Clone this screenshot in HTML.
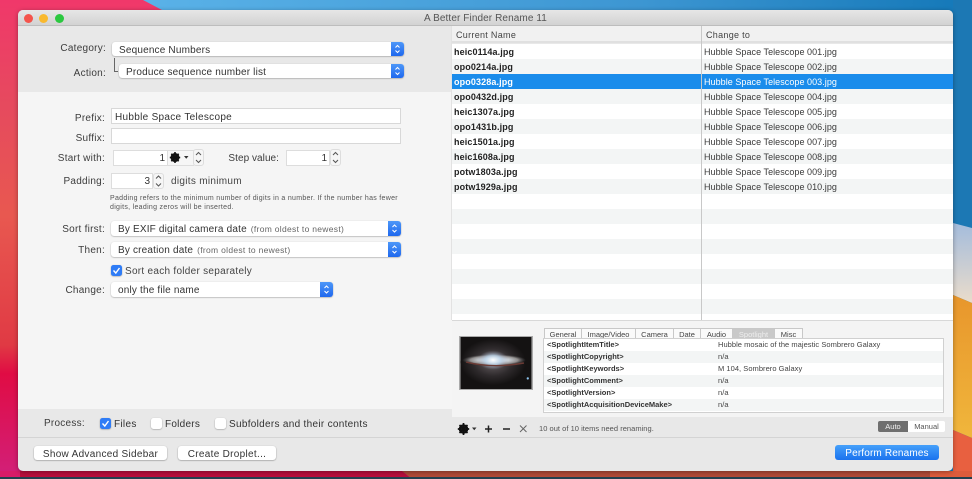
<!DOCTYPE html>
<html><head><meta charset="utf-8"><style>
*{box-sizing:border-box}
html,body{margin:0;padding:0;width:972px;height:479px;overflow:hidden;background:#1d7fbd}
body{position:relative;font-family:"Liberation Sans",sans-serif;font-size:10px;color:#333}
#win{position:absolute;left:18px;top:10px;width:935px;height:461px;border-radius:5px;overflow:hidden;background:#e8e8e8;box-shadow:0 1px 5px rgba(0,0,0,.35);filter:blur(.35px)}
#win div,#win svg.a{position:absolute}
.t{white-space:nowrap;line-height:12px}
.l{text-align:right;white-space:nowrap;line-height:12px;color:#3c3c3c;letter-spacing:.25px}
.sel{background:#fff;border-radius:3px;box-shadow:0 .5px 1.5px rgba(0,0,0,.35);height:15px;line-height:16px;padding-left:7px;color:#333;letter-spacing:.18px;white-space:nowrap}
.sel i{font-style:normal;color:#666;font-size:8.5px;letter-spacing:.3px;margin-left:1px}
.sb{position:absolute;right:0;top:0;width:13px;height:100%;background:linear-gradient(#4d97f8,#1f68ee);border-radius:0 3px 3px 0}
.sb svg,.st svg{position:absolute;left:0;top:0}
.inp{background:#fff;border:1px solid #d8d8d8;height:16px;line-height:17px;padding-left:3px;letter-spacing:.3px;white-space:nowrap}
.num{background:#fff;border:1px solid #ddd;height:16px;line-height:16px;text-align:right;padding-right:2px}
.st{width:11px;height:16px;background:#f6f6f6;border:1px solid #ddd;border-radius:3px}
.cb{width:11px;height:11px;border-radius:2.5px;background:#fff;box-shadow:0 .5px 1.5px rgba(0,0,0,.35)}
.cb.on{background:#2f7cf6}
.btn{background:#fff;border-radius:3px;box-shadow:0 .5px 1.5px rgba(0,0,0,.4);height:15px;line-height:17px;text-align:center;letter-spacing:.3px;white-space:nowrap}
.r{left:434px;width:501px;height:15px;line-height:17px;white-space:nowrap;font-size:9px;color:#222}
.r b{position:absolute;left:2px;top:0;color:#222;letter-spacing:.12px}
.r span{position:absolute;left:252px;top:0;letter-spacing:.05px;color:#3a3a3a}
.m{left:526px;width:399px;height:12px;line-height:12px;font-size:7.5px;white-space:nowrap}
.m b{position:absolute;left:3px;top:0;color:#333;letter-spacing:0}
.m span{position:absolute;left:174px;top:0;color:#444;letter-spacing:.04px}
.tab{top:318px;height:12px;line-height:11px;text-align:center;font-size:7.5px;color:#444;border:1px solid #c8c8c8;border-left:0;background:#fafafa}
</style></head><body>
<svg style="position:absolute;left:0;top:0" width="972" height="479" viewBox="0 0 972 479">
<defs>
<linearGradient id="p" x1="0" y1="0" x2="0" y2="1"><stop offset="0" stop-color="#f0386a"/><stop offset=".22" stop-color="#e64a5e"/><stop offset=".45" stop-color="#e85850"/><stop offset=".72" stop-color="#e03a44"/><stop offset=".78" stop-color="#e00c44"/><stop offset="1" stop-color="#d2207a"/></linearGradient>
<linearGradient id="b" x1="0" y1="0" x2="1" y2="0"><stop offset="0" stop-color="#5ab2e8"/><stop offset=".6" stop-color="#3d96d2"/><stop offset="1" stop-color="#1478b8"/></linearGradient>
<linearGradient id="w" x1="0" y1="0" x2="0" y2="1"><stop offset="0" stop-color="#a4bcdc"/><stop offset="1" stop-color="#eadccb"/></linearGradient>
<linearGradient id="o" x1="0" y1="0" x2="0" y2="1"><stop offset="0" stop-color="#e8962c"/><stop offset="1" stop-color="#f0b63c"/></linearGradient>
</defs>
<rect width="972" height="479" fill="url(#p)"/>
<polygon points="143,0 972,0 972,479 700,479 162,10" fill="url(#b)"/>
<polygon points="953,0 972,0 972,229 953,224" fill="#1c78b4"/>
<polygon points="953,223 972,228 972,303 953,295" fill="url(#w)"/>
<polygon points="953,295 972,303 972,438 953,430" fill="url(#o)"/>
<polygon points="953,430 972,438 972,479 953,479" fill="#e86040"/>
<polygon points="0,471 402,471 412,479 0,479" fill="#b80f3c"/>
<polygon points="0,471 20,471 20,479 0,479" fill="#d81c68"/>
<polygon points="402,471 972,471 972,479 412,479" fill="#b04a38"/>
<rect x="930" y="471" width="42" height="8" fill="#dd5c3c"/>
<rect x="0" y="477" width="972" height="2" fill="#23404f"/>
</svg>
<div id="win">
<!-- title -->
<div style="left:0;top:0;width:935px;height:16px;background:linear-gradient(#e6e6e6,#d2d2d2);border-bottom:1px solid #bdbdbd"></div>
<div style="left:6px;top:4px;width:9px;height:9px;border-radius:50%;background:#f4544c"></div>
<div style="left:21px;top:4px;width:9px;height:9px;border-radius:50%;background:#f9b92e"></div>
<div style="left:37px;top:4px;width:9px;height:9px;border-radius:50%;background:#2bc840"></div>
<div class="t" style="left:0;top:3px;width:935px;text-align:center;color:#555;letter-spacing:.1px;font-size:10px">A Better Finder Rename 11</div>

<!-- left bands -->
<div style="left:0;top:82px;width:434px;height:317px;background:#f5f5f5"></div>
<div style="left:0;top:427px;width:935px;height:1px;background:#d4d4d4"></div>

<!-- category -->
<div class="l" style="left:0;top:33px;width:88px">Category:</div>
<div class="l" style="left:0;top:58px;width:88px">Action:</div>
<div class="sel" style="left:94px;top:32px;width:292px;height:14px;line-height:17px">Sequence Numbers<span class="sb"><svg width="13" height="14"><path d="M4.500 5.500 6.500 3.500 8.500 5.500M4.500 8.500 6.500 10.500 8.500 8.500" fill="none" stroke="#fff"/></svg></span></div>
<div style="left:96px;top:48px;width:1px;height:14px;background:#666"></div>
<div style="left:96px;top:61px;width:4px;height:1px;background:#666"></div>
<div class="sel" style="left:101px;top:54px;width:285px;height:14px;line-height:17px">Produce sequence number list<span class="sb"><svg width="13" height="14"><path d="M4.500 5.500 6.500 3.500 8.500 5.500M4.500 8.500 6.500 10.500 8.500 8.500" fill="none" stroke="#fff"/></svg></span></div>

<!-- prefix etc -->
<div class="l" style="left:0;top:103px;width:87px">Prefix:</div>
<div class="inp" style="left:93px;top:98px;width:290px">Hubble Space Telescope</div>
<div class="l" style="left:0;top:123px;width:87px">Suffix:</div>
<div class="inp" style="left:93px;top:118px;width:290px"></div>
<div class="l" style="left:0;top:143px;width:87px">Start with:</div>
<div class="num" style="left:95px;top:140px;width:55px">1</div>
<div style="left:150px;top:140px;width:26px;height:16px;background:#f6f6f6;border-top:1px solid #ddd;border-bottom:1px solid #ddd"></div>
<svg class="a" style="left:151px;top:141px" width="22" height="13" viewBox="0 0 22 13"><circle cx="6" cy="6.500" r="3.400" fill="none" stroke="#111" stroke-width="2.300"/><path d="M6 1V12M.8 6.500H11.200M2.300 2.800 9.700 10.200M9.700 2.800 2.300 10.200" stroke="#111" stroke-width="1.600"/><path d="M15 5h4.500l-2.250 2.800z" fill="#333"/></svg>
<div class="st" style="left:175px;top:139px;height:17px"><svg width="9" height="15"><path d="M2 5 4.500 2.500 7 5M2 10 4.500 12.500 7 10" fill="none" stroke="#555"/></svg></div>
<div class="l" style="left:190px;top:143px;width:71px;letter-spacing:.05px">Step value:</div>
<div class="num" style="left:268px;top:140px;width:44px">1</div>
<div class="st" style="left:312px;top:139px;height:17px"><svg width="9" height="15"><path d="M2 5 4.500 2.500 7 5M2 10 4.500 12.500 7 10" fill="none" stroke="#555"/></svg></div>
<div class="l" style="left:0;top:166px;width:87px">Padding:</div>
<div class="num" style="left:93px;top:163px;width:42px">3</div>
<div class="st" style="left:135px;top:163px"><svg width="9" height="14"><path d="M2 4.500 4.500 2 7 4.500M2 9.500 4.500 12 7 9.500" fill="none" stroke="#555"/></svg></div>
<div class="t" style="left:153px;top:166px;letter-spacing:.3px;color:#444">digits minimum</div>
<div class="t" style="left:92px;top:184px;width:310px;font-size:7px;line-height:9px;color:#555;letter-spacing:.3px">Padding refers to the minimum number of digits in a number. If the number has fewer<br>digits, leading zeros will be inserted.</div>

<div class="l" style="left:0;top:214px;width:87px">Sort first:</div>
<div class="sel" style="left:93px;top:211px;width:290px">By EXIF digital camera date <i>(from oldest to newest)</i><span class="sb"><svg width="13" height="15"><path d="M4.500 6 6.500 4 8.500 6M4.500 9 6.500 11 8.500 9" fill="none" stroke="#fff"/></svg></span></div>
<div class="l" style="left:0;top:235px;width:87px">Then:</div>
<div class="sel" style="left:93px;top:232px;width:290px">By creation date <i>(from oldest to newest)</i><span class="sb"><svg width="13" height="15"><path d="M4.500 6 6.500 4 8.500 6M4.500 9 6.500 11 8.500 9" fill="none" stroke="#fff"/></svg></span></div>
<div class="cb on" style="left:93px;top:255px"><svg width="11" height="11"><path d="M2.500 5.500 4.800 8 8.500 3" fill="none" stroke="#fff" stroke-width="1.400"/></svg></div>
<div class="t" style="left:107px;top:256px;letter-spacing:.28px;color:#444">Sort each folder separately</div>
<div class="l" style="left:0;top:275px;width:87px">Change:</div>
<div class="sel" style="left:93px;top:272px;width:222px;line-height:18px">only the file name<span class="sb"><svg width="13" height="15"><path d="M4.500 6 6.500 4 8.500 6M4.500 9 6.500 11 8.500 9" fill="none" stroke="#fff"/></svg></span></div>

<!-- process -->
<div class="l" style="left:26px;top:408px;letter-spacing:.25px">Process:</div>
<div class="cb on" style="left:82px;top:408px"><svg width="11" height="11"><path d="M2.500 5.500 4.800 8 8.500 3" fill="none" stroke="#fff" stroke-width="1.400"/></svg></div>
<div class="t" style="left:96px;top:409px;letter-spacing:.3px">Files</div>
<div class="cb" style="left:133px;top:408px"></div>
<div class="t" style="left:147px;top:409px;letter-spacing:.25px">Folders</div>
<div class="cb" style="left:197px;top:408px"></div>
<div class="t" style="left:211px;top:409px;letter-spacing:.3px">Subfolders and their contents</div>
<div class="btn" style="left:16px;top:436px;width:133px;height:14px">Show Advanced Sidebar</div>
<div class="btn" style="left:160px;top:436px;width:98px;height:14px">Create Droplet...</div>

<!-- right table -->
<div style="left:434px;top:16px;width:501px;height:17px;background:#f1f1f1;border-bottom:2px solid #e0e0e0"></div>
<div class="t" style="left:438px;top:19px;font-size:9px;letter-spacing:.3px;color:#444">Current Name</div>
<div class="t" style="left:688px;top:19px;font-size:9px;letter-spacing:.3px;color:#444">Change to</div>
<div style="left:434px;top:34px;width:501px;height:276px;background:repeating-linear-gradient(#fff 0,#fff 15px,#f3f5f5 15px,#f3f5f5 30px)"></div>
<div class="r" style="top:34px"><b>heic0114a.jpg</b><span>Hubble Space Telescope 001.jpg</span></div>
<div class="r" style="top:49px"><b>opo0214a.jpg</b><span>Hubble Space Telescope 002.jpg</span></div>
<div class="r" style="top:64px;background:#1a8ceb"><b style="color:#fff">opo0328a.jpg</b><span style="color:#fff">Hubble Space Telescope 003.jpg</span></div>
<div class="r" style="top:79px"><b>opo0432d.jpg</b><span>Hubble Space Telescope 004.jpg</span></div>
<div class="r" style="top:94px"><b>heic1307a.jpg</b><span>Hubble Space Telescope 005.jpg</span></div>
<div class="r" style="top:109px"><b>opo1431b.jpg</b><span>Hubble Space Telescope 006.jpg</span></div>
<div class="r" style="top:124px"><b>heic1501a.jpg</b><span>Hubble Space Telescope 007.jpg</span></div>
<div class="r" style="top:139px"><b>heic1608a.jpg</b><span>Hubble Space Telescope 008.jpg</span></div>
<div class="r" style="top:154px"><b>potw1803a.jpg</b><span>Hubble Space Telescope 009.jpg</span></div>
<div class="r" style="top:169px"><b>potw1929a.jpg</b><span>Hubble Space Telescope 010.jpg</span></div>
<div style="left:683px;top:16px;width:1px;height:294px;background:#c8c8c8"></div>
<div style="left:433px;top:16px;width:1px;height:294px;background:#e2e2e2"></div>

<!-- inspector -->
<div style="left:434px;top:310px;width:501px;height:97px;background:#f4f4f4;border-top:1px solid #d8d8d8"></div>
<div style="left:434px;top:407px;width:501px;height:20px;background:#e8e8e8"></div>
<svg class="a" style="left:441px;top:326px;border:1px solid #aaa" width="74" height="54" viewBox="0 0 74 54">
<defs><radialGradient id="g" cx=".5" cy=".5" r=".5"><stop offset="0" stop-color="#fff"/><stop offset=".35" stop-color="#dfe8f0"/><stop offset=".75" stop-color="#8f8c8c"/><stop offset="1" stop-color="#555" stop-opacity="0"/></radialGradient>
<radialGradient id="c" cx=".5" cy=".5" r=".5"><stop offset="0" stop-color="#fff"/><stop offset=".5" stop-color="#b8d0e6" stop-opacity=".8"/><stop offset="1" stop-color="#889" stop-opacity="0"/></radialGradient>
<radialGradient id="h" cx=".5" cy=".5" r=".5"><stop offset="0" stop-color="#6a6266"/><stop offset=".6" stop-color="#2e2a2c"/><stop offset="1" stop-color="#141212"/></radialGradient></defs>
<rect width="74" height="54" fill="#141212"/>
<ellipse cx="34" cy="26" rx="34" ry="24" fill="url(#h)"/>
<ellipse cx="35" cy="24" rx="33" ry="6" fill="url(#g)"/>
<ellipse cx="34" cy="24" rx="16" ry="10" fill="url(#c)"/>
<path d="M6 26Q34 33 66 27" fill="none" stroke="#6b3a34" stroke-width="1.500"/>
<circle cx="70" cy="43" r="1.200" fill="#8cc4ee"/>
</svg>
<div class="tab" style="left:526px;width:38px;border-left:1px solid #c8c8c8">General</div>
<div class="tab" style="left:564px;width:54px">Image/Video</div>
<div class="tab" style="left:618px;width:38px">Camera</div>
<div class="tab" style="left:656px;width:27px">Date</div>
<div class="tab" style="left:683px;width:32px">Audio</div>
<div class="tab" style="left:715px;width:42px;background:#c9c9c9;color:#eee">Spotlight</div>
<div class="tab" style="left:757px;width:28px">Misc</div>
<div style="left:525px;top:328px;width:401px;height:75px;border:1px solid #d0d0d0;background:#fff"></div>
<div class="m" style="top:329px"><b>&lt;SpotlightItemTitle&gt;</b><span>Hubble mosaic of the majestic Sombrero Galaxy</span></div>
<div class="m" style="top:341px;background:#f3f5f5"><b>&lt;SpotlightCopyright&gt;</b><span>n/a</span></div>
<div class="m" style="top:353px"><b>&lt;SpotlightKeywords&gt;</b><span>M 104, Sombrero Galaxy</span></div>
<div class="m" style="top:365px;background:#f3f5f5"><b>&lt;SpotlightComment&gt;</b><span>n/a</span></div>
<div class="m" style="top:377px"><b>&lt;SpotlightVersion&gt;</b><span>n/a</span></div>
<div class="m" style="top:389px;background:#f3f5f5"><b>&lt;SpotlightAcquisitionDeviceMake&gt;</b><span>n/a</span></div>

<!-- toolbar -->
<svg class="a" style="left:439px;top:412px" width="72" height="14" viewBox="0 0 72 14"><circle cx="6.500" cy="7" r="3.600" fill="none" stroke="#111" stroke-width="2.400"/><path d="M6.500 1V13M.8 7H12.200M2.500 3 10.500 11M10.500 3 2.500 11" stroke="#111" stroke-width="1.700"/><path d="M15 5.500h4.500l-2.250 2.800z" fill="#333"/><path d="M28 7h7M31.500 3.500v7" stroke="#222" stroke-width="1.500"/><path d="M46 7h7" stroke="#222" stroke-width="1.500"/><path d="M63 3.500l6.500 6.500M69.500 3.500l-6.500 6.500" stroke="#666"/></svg>
<div class="t" style="left:521px;top:413px;font-size:7.5px;color:#555;letter-spacing:.03px">10 out of 10 items need renaming.</div>
<div class="t" style="left:860px;top:411px;width:30px;height:11px;line-height:11px;background:#6f6f6f;color:#f2f2f2;text-align:center;font-size:7.5px;border-radius:2px 0 0 2px">Auto</div>
<div class="t" style="left:890px;top:411px;width:37px;height:11px;line-height:11px;background:#fff;color:#555;text-align:center;font-size:7.5px;border-radius:0 2px 2px 0">Manual</div>
<div class="btn" style="left:817px;top:435px;width:104px;background:linear-gradient(#45a0fa,#1a72ee);color:#fff;box-shadow:none;letter-spacing:.15px">Perform Renames</div>
</div>
</body></html>
